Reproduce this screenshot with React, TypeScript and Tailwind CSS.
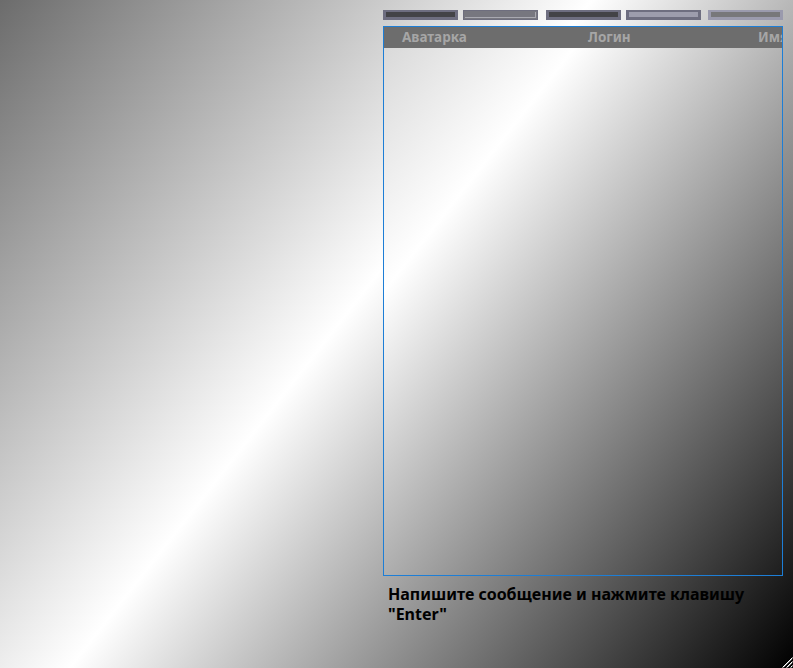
import React from "react";

// Small toolbar "buttons" along the top of the list panel
function BarButton({ variant, className = "" }: { variant: "dark" | "flat" | "light" | "pale"; className?: string }) {
  if (variant === "flat") {
    return (
      <div className={`h-[10px] w-[75px] border border-[#6e6e7e] bg-[#77777f] p-px ${className}`}>
        <div className="h-full w-full border-r border-b border-[#a9a9b1]" />
      </div>
    );
  }
  const outer =
    variant === "pale" ? "border-[#9a9aad]" : "border-[#6e6e80]";
  const inner =
    variant === "dark" ? "bg-[#434347]" : variant === "light" ? "bg-[#9d9dad]" : "bg-[#77777a]";
  return (
    <div className={`h-[10px] w-[75px] border-x-[3px] border-t-2 border-b-[3px] ${outer} ${inner} ${className}`} />
  );
}

function ResizeGrip() {
  return (
    <svg className="absolute right-0 bottom-0" width="13" height="13" viewBox="0 0 13 13">
      <g stroke="#ffffff" strokeWidth="1">
        <line x1="12.5" y1="2.5" x2="2.5" y2="12.5" />
        <line x1="12.5" y1="6.5" x2="6.5" y2="12.5" />
        <line x1="12.5" y1="10.5" x2="10.5" y2="12.5" />
      </g>
      <g stroke="#8a8a8a" strokeWidth="1">
        <line x1="12.5" y1="3.5" x2="3.5" y2="12.5" />
        <line x1="12.5" y1="7.5" x2="7.5" y2="12.5" />
        <line x1="12.5" y1="11.5" x2="11.5" y2="12.5" />
      </g>
    </svg>
  );
}

export default function App() {
  return (
    <div
      className="relative h-[668px] w-[793px] overflow-hidden bg-[linear-gradient(128deg,#6c6c6c_0%,#ffffff_45%,#000000_100%)]"
      style={{ fontFamily: '"Noto Sans", "Open Sans", sans-serif' }}
    >
      <div className="ml-[383px] flex w-[400px] flex-col pt-[10px]">
        {/* toolbar */}
        <div className="flex items-start">
          <BarButton variant="dark" />
          <BarButton variant="flat" className="ml-[5px]" />
          <BarButton variant="dark" className="ml-[8px]" />
          <BarButton variant="light" className="ml-[5px]" />
          <BarButton variant="pale" className="ml-[7px]" />
        </div>

        {/* user list */}
        <div className="mt-[6px] h-[550px] border border-[#1d7ed6] bg-[linear-gradient(128deg,#d6d6d6_0%,#ffffff_25%,#1e1e1e_100%)]">
          <div className="flex h-[21px] items-center overflow-hidden whitespace-nowrap bg-[#6d6d6d] text-[13.5px] leading-none font-bold text-[#a6a6a6]">
            <span className="w-[186px] shrink-0 pl-[18px]">Аватарка</span>
            <span className="w-[170px] shrink-0 pl-[18px]">Логин</span>
            <span className="shrink-0 pl-[18px]">Имя</span>
          </div>
        </div>

        {/* hint */}
        <p className="mt-[8px] w-[395px] pl-[5px] text-[16px] leading-[20px] font-bold text-black">
          Напишите сообщение и нажмите клавишу
          <br />
          "Enter"
        </p>
      </div>

      <ResizeGrip />
    </div>
  );
}
